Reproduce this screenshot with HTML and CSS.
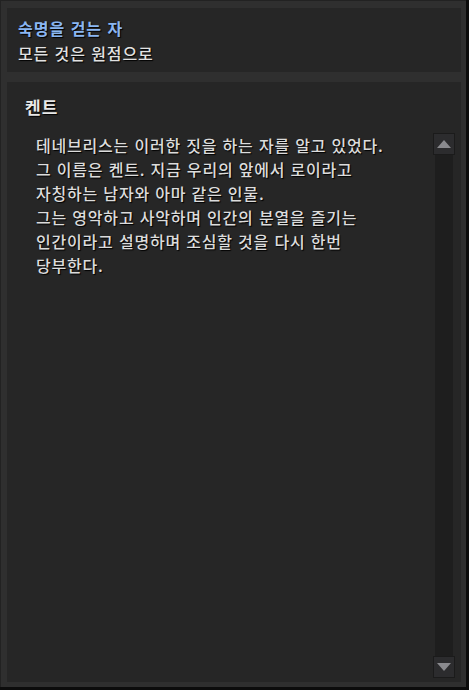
FILE: index.html
```html
<!DOCTYPE html>
<html lang="ko">
<head>
<meta charset="utf-8">
<link rel="stylesheet" href="styles.css">
</head>
<body>
<div class="frame">
  <section class="header-panel">
    <div class="quest-title">숙명을 걷는 자</div>
    <div class="quest-sub">모든 것은 원점으로</div>
  </section>
  <section class="content-panel">
    <div class="speaker">켄트</div>
    <div class="content-body">
      <div class="text">
        <p>테네브리스는 이러한 짓을 하는 자를 알고 있었다.</p>
        <p>그 이름은 켄트. 지금 우리의 앞에서 로이라고</p>
        <p>자칭하는 남자와 아마 같은 인물.</p>
        <p>그는 영악하고 사악하며 인간의 분열을 즐기는</p>
        <p>인간이라고 설명하며 조심할 것을 다시 한번</p>
        <p>당부한다.</p>
      </div>
      <div class="scrollbar">
        <div class="sb-btn"><svg width="14" height="8" viewBox="0 0 14 8"><polygon points="7,0 14,8 0,8" fill="#8a8a8e"/></svg></div>
        <div class="sb-track"></div>
        <div class="sb-btn"><svg width="14" height="8" viewBox="0 0 14 8"><polygon points="0,0 14,0 7,8" fill="#8a8a8e"/></svg></div>
      </div>
    </div>
  </section>
</div>
</body>
</html>
```
FILE: styles.css
```css
html, body {
  margin: 0;
  padding: 0;
  background: #0c0c0c;
}
.frame {
  width: 466px;
  height: 687px;
  box-sizing: border-box;
  background: #2f2f2f;
  border-top: 1px solid #222;
  border-left: 1px solid #222;
  padding: 7px 5px 5px 6px;
  display: flex;
  flex-direction: column;
  gap: 10px;
  font-family: "Noto Sans CJK KR", "Noto Sans", sans-serif;
}
.header-panel {
  background: #262626;
  height: 64px;
  box-sizing: border-box;
  padding: 10px 11px;
  display: flex;
  flex-direction: column;
  gap: 5px;
}
.quest-title {
  color: #8ab6f2;
  font-size: 16px;
  font-weight: bold;
  line-height: 20px;
  letter-spacing: 1px;
  text-shadow: 1px 1px 1px #000;
}
.quest-sub {
  color: #e2e2e2;
  font-size: 16px;
  font-weight: 500;
  line-height: 20px;
  letter-spacing: 0.9px;
  text-shadow: 1px 1px 1px #000;
}
.content-panel {
  flex: 1;
  background: #262626;
  display: flex;
  flex-direction: column;
  padding: 14px 6px 4px 18px;
}
.speaker {
  color: #e8e8e8;
  font-size: 17px;
  font-weight: bold;
  line-height: 22px;
  letter-spacing: 1px;
  text-shadow: 1px 1px 1px #000;
}
.content-body {
  flex: 1;
  display: flex;
  margin-top: 15px;
}
.text {
  flex: 1;
  padding: 0 0 0 11px;
}
.text p {
  margin: 0;
  color: #dcdcdc;
  font-size: 16px;
  font-weight: 500;
  line-height: 24px;
  letter-spacing: 0.8px;
  text-shadow: 1px 1px 1px #000;
}
.scrollbar {
  width: 22px;
  display: flex;
  flex-direction: column;
}
.sb-btn {
  height: 22px;
  box-sizing: border-box;
  background: #2c2c2e;
  border: 1px solid #1b1b1b;
  display: flex;
  align-items: center;
  justify-content: center;
}
.sb-track {
  flex: 1;
  background: #1e1e1e;
  margin: 0 2px;
}
```
